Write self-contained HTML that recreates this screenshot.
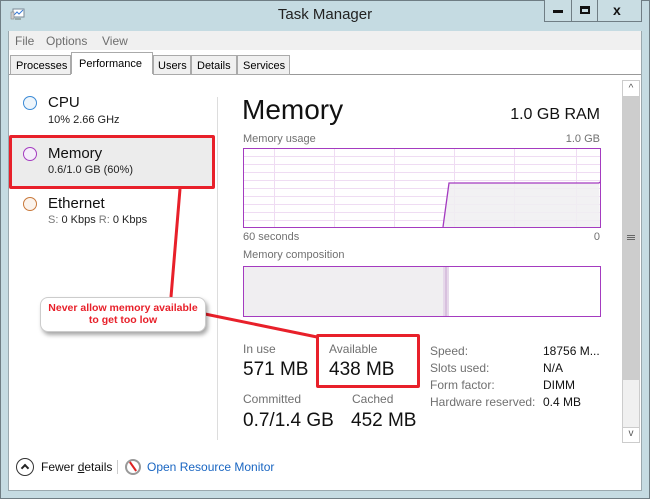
<!DOCTYPE html>
<html><head><meta charset="utf-8"><style>
*{margin:0;padding:0;box-sizing:border-box}
body{width:650px;height:499px;background:#c5dbe2;font-family:"Liberation Sans",sans-serif;position:relative;overflow:hidden}
.a{position:absolute;white-space:nowrap}
.g{color:#707070;font-size:11px}
.t{font-size:11px}
</style></head><body>
<div class="a" style="left:0;top:0;width:650px;height:499px;border:1px solid #6f7d84"></div>
<svg class="a" style="left:10px;top:8px" width="16" height="14"><rect x="3" y="1" width="11" height="8" fill="#fff" stroke="#7a8a96"/><polyline points="4,7 7,4 9,6 13,2" fill="none" stroke="#3a7bd5"/><rect x="1" y="4" width="3" height="7" fill="#ccc" stroke="#888" stroke-width=".6"/><rect x="5" y="10" width="6" height="2" fill="#9aa"/></svg>
<div class="a" style="left:0;width:650px;top:6px;text-align:center;font-size:15px;color:#222">Task Manager</div>
<div class="a" style="left:544px;top:0;width:98px;height:22px;border:1px solid #6f7d84;border-top:none;background:#c9dde3"></div>
<div class="a" style="left:571px;top:0;width:1px;height:22px;background:#6f7d84"></div>
<div class="a" style="left:597px;top:0;width:1px;height:22px;background:#6f7d84"></div>
<div class="a" style="left:553px;top:10px;width:10px;height:3px;background:#111"></div>
<div class="a" style="left:580px;top:6px;width:10px;height:8px;border:2px solid #111;border-top-width:3px"></div>
<div class="a" style="left:613px;top:2px;font-size:14px;font-weight:bold;color:#111">x</div>
<div class="a" style="left:8px;top:31px;width:634px;height:460px;background:#fff;border:1px solid #9aa8ae"></div>
<div class="a" style="left:9px;top:31px;width:632px;height:19px;background:#f0f0f0"></div>
<div class="a g" style="left:15px;top:34px;font-size:12px;color:#6d6d6d">File</div>
<div class="a g" style="left:46px;top:34px;font-size:12px;color:#6d6d6d">Options</div>
<div class="a g" style="left:102px;top:34px;font-size:12px;color:#6d6d6d">View</div>
<div class="a" style="left:9px;top:74px;width:632px;height:1px;background:#999"></div>
<div class="a t" style="left:10px;top:55px;width:61px;height:20px;border:1px solid #aaa;background:#f0f0f0;padding:4px 0 0 5px">Processes</div>
<div class="a t" style="left:71px;top:52px;width:82px;height:23px;border:1px solid #aaa;border-bottom:none;background:#fff;padding:5px 0 0 7px">Performance</div>
<div class="a t" style="left:153px;top:55px;width:38px;height:20px;border:1px solid #aaa;background:#f0f0f0;padding:4px 0 0 4px">Users</div>
<div class="a t" style="left:191px;top:55px;width:46px;height:20px;border:1px solid #aaa;background:#f0f0f0;padding:4px 0 0 5px">Details</div>
<div class="a t" style="left:237px;top:55px;width:53px;height:20px;border:1px solid #aaa;background:#f0f0f0;padding:4px 0 0 5px">Services</div>
<div class="a" style="left:71px;top:74px;width:82px;height:1px;background:#fff"></div>
<div class="a" style="left:217px;top:97px;width:1px;height:343px;background:#ddd"></div>
<div class="a" style="left:23px;top:96px;width:14px;height:14px;border-radius:50%;border:1.5px solid #3a8ad6;background:#eef5fb"></div>
<div class="a" style="left:48px;top:94px;font-size:15px;color:#111">CPU</div>
<div class="a" style="left:48px;top:114px;font-size:11px;color:#222">10% 2.66 GHz</div>
<div class="a" style="left:9px;top:135px;width:206px;height:54px;background:#ececec;border:3px solid #e8202a;border-radius:2px"></div>
<div class="a" style="left:23px;top:147px;width:14px;height:14px;border-radius:50%;border:1.5px solid #a43bc0;background:#f5eefa"></div>
<div class="a" style="left:48px;top:145px;font-size:15px;color:#111">Memory</div>
<div class="a" style="left:48px;top:164px;font-size:11px;color:#222">0.6/1.0 GB (60%)</div>
<div class="a" style="left:23px;top:197px;width:14px;height:14px;border-radius:50%;border:1.5px solid #c8783a;background:#fbf3ec"></div>
<div class="a" style="left:48px;top:195px;font-size:15px;color:#111">Ethernet</div>
<div class="a" style="left:48px;top:214px;font-size:11px;color:#222"><span style="color:#777">S:</span> 0 Kbps <span style="color:#777">R:</span> 0 Kbps</div>
<div class="a" style="left:242px;top:94px;font-size:28px;color:#111">Memory</div>
<div class="a" style="left:500px;top:106px;width:100px;text-align:right;font-size:16px;color:#111">1.0 GB RAM</div>
<div class="a g" style="left:243px;top:133px">Memory usage</div>
<div class="a g" style="left:500px;top:133px;width:100px;text-align:right">1.0 GB</div>
<svg class="a" style="left:243px;top:148px" width="358" height="80">
<g stroke="#efdcf3" stroke-width="1">
<line x1="0" y1="8.5" x2="358" y2="8.5"/><line x1="0" y1="16.5" x2="358" y2="16.5"/><line x1="0" y1="24.5" x2="358" y2="24.5"/><line x1="0" y1="32.5" x2="358" y2="32.5"/><line x1="0" y1="40.5" x2="358" y2="40.5"/><line x1="0" y1="48.5" x2="358" y2="48.5"/><line x1="0" y1="56.5" x2="358" y2="56.5"/><line x1="0" y1="64.5" x2="358" y2="64.5"/><line x1="0" y1="72.5" x2="358" y2="72.5"/>
<line x1="31.5" y1="0" x2="31.5" y2="80"/><line x1="91.5" y1="0" x2="91.5" y2="80"/><line x1="151.5" y1="0" x2="151.5" y2="80"/><line x1="211.5" y1="0" x2="211.5" y2="80"/><line x1="271.5" y1="0" x2="271.5" y2="80"/><line x1="333.5" y1="0" x2="333.5" y2="80"/></g>
<polygon points="200,79 206,35 356,35 357,79" fill="#f0eef1" opacity=".85"/>
<polyline points="200,79 206,35 356,35 357,34" fill="none" stroke="#a43bc0" stroke-width="1.3"/>
<rect x=".5" y=".5" width="357" height="79" fill="none" stroke="#a43bc0"/>
</svg>
<div class="a g" style="left:243px;top:231px">60 seconds</div>
<div class="a g" style="left:590px;top:231px;width:10px;text-align:right">0</div>
<div class="a g" style="left:243px;top:249px">Memory composition</div>
<svg class="a" style="left:243px;top:266px" width="358" height="51">
<rect x="1" y="1" width="199" height="49" fill="#f0eef1"/>
<rect x="200" y="1" width="6" height="49" fill="#e6d8ea"/><line x1="203" y1="1" x2="203" y2="50" stroke="#c9a8d3"/>
<rect x=".5" y=".5" width="357" height="50" fill="none" stroke="#a43bc0"/>
</svg>
<div class="a g" style="left:243px;top:342px;font-size:12px">In use</div>
<div class="a" style="left:243px;top:359px;font-size:19px;color:#111">571 MB</div>
<div class="a" style="left:316px;top:334px;width:104px;height:54px;border:3px solid #e8202a;border-radius:2px"></div>
<div class="a g" style="left:329px;top:342px;font-size:12px">Available</div>
<div class="a" style="left:329px;top:359px;font-size:19px;color:#111">438 MB</div>
<div class="a g" style="left:243px;top:392px;font-size:12px">Committed</div>
<div class="a" style="left:243px;top:410px;font-size:19px;color:#111">0.7/1.4 GB</div>
<div class="a g" style="left:352px;top:392px;font-size:12px">Cached</div>
<div class="a" style="left:351px;top:410px;font-size:19px;color:#111">452 MB</div>
<div class="a g" style="left:430px;top:343px;font-size:12px;line-height:17px">Speed:<br>Slots used:<br>Form factor:<br>Hardware reserved:</div>
<div class="a" style="left:543px;top:343px;font-size:12px;line-height:17px;color:#111">18756 M...<br>N/A<br>DIMM<br>0.4 MB</div>
<div class="a" style="left:622px;top:80px;width:18px;height:363px;background:#f0f0f0;border:1px solid #ccc"></div>
<div class="a" style="left:623px;top:97px;width:16px;height:283px;background:#cdcdcd"></div>
<div class="a" style="left:622px;top:80px;width:18px;height:17px;background:#fff;border:1px solid #ccc;font-size:10px;text-align:center;color:#555;line-height:16px">^</div>
<div class="a" style="left:622px;top:427px;width:18px;height:16px;background:#fff;border:1px solid #ccc;font-size:10px;text-align:center;color:#555;line-height:12px">v</div>
<div class="a" style="left:627px;top:235px;width:8px;height:1px;background:#666;box-shadow:0 2px #666,0 4px #666"></div>
<svg class="a" style="left:0;top:0" width="650" height="499"><line x1="180" y1="189" x2="171" y2="297" stroke="#e8202a" stroke-width="3"/><line x1="205" y1="314" x2="317" y2="337" stroke="#e8202a" stroke-width="3"/></svg>
<div class="a" style="left:40px;top:297px;width:166px;height:35px;background:#fff;border-radius:8px;border:1px solid #ccc;box-shadow:2px 3px 4px rgba(0,0,0,.35);color:#e8202a;font-weight:bold;font-size:10.5px;text-align:center;line-height:12px;padding-top:4px">Never allow memory available<br>to get too low</div>
<div class="a" style="left:16px;top:458px;width:18px;height:18px;border-radius:50%;border:1.5px solid #333"></div>
<div class="a" style="left:22px;top:465px;width:6px;height:6px;border-left:2px solid #222;border-top:2px solid #222;transform:rotate(45deg)"></div>
<div class="a" style="left:41px;top:460px;font-size:12px;color:#111">Fewer <u>d</u>etails</div>
<div class="a" style="left:117px;top:460px;width:1px;height:14px;background:#ccc"></div>
<div class="a" style="left:125px;top:459px;width:16px;height:16px;border-radius:50%;border:2px solid #999;background:#fff"></div>
<div class="a" style="left:132px;top:461px;width:2px;height:11px;background:#d22;transform:rotate(-35deg)"></div>
<div class="a" style="left:147px;top:460px;font-size:12px;color:#1a66c2">Open Resource Monitor</div>
</body></html>
